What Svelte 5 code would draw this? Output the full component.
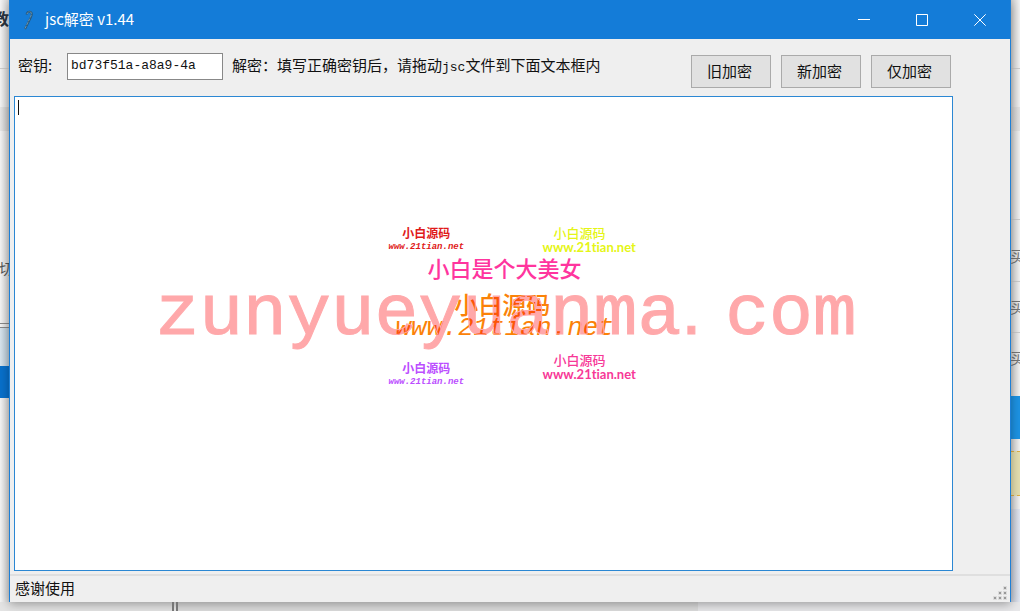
<script>
  let key = $state('bd73f51a-a8a9-4a');
  let content = $state('');
  const actions = ['旧加密', '新加密', '仅加密'];
  const grip = [[10, 0], [5, 5], [10, 5], [0, 10], [5, 10], [10, 10]];
</script>

<div class="desktop">
  <div class="strip left" aria-hidden="true">
    <span class="head">教</span>
    <i class="rule" style="top:68px"></i>
    <i class="band grey" style="top:107px;height:24px"></i>
    <span class="bit" style="top:258px">切</span>
    <i class="band bar" style="top:323px"></i>
    <i class="band pale" style="top:328px;height:38px"></i>
    <i class="band blue" style="top:366px;height:32px"></i>
  </div>

  <main class="window">
    <header class="titlebar">
      <svg class="appicon" width="16" height="20" viewBox="0 0 16 20" fill="none">
        <path d="M3 19 8.500 8C10 5 10.500 3 8.500 2S5 2.500 4.500 4.500" stroke="#24587f" stroke-width="2" />
        <path d="M3 18.500 8 8C9.500 5 10 3 8.500 2S5.500 2.500 5 4" stroke="#7097ae" stroke-width="1" stroke-dasharray="3 1" />
      </svg>
      <h1>jsc解密 v1.44</h1>
      <div class="controls">
        <button aria-label="最小化"><svg width="12" height="12" viewBox="0 0 12 12"><path d="M0 5.500H12" /></svg></button>
        <button aria-label="最大化"><svg width="12" height="12" viewBox="0 0 12 12"><path d="M.5.5h11v11H.5z" /></svg></button>
        <button aria-label="关闭"><svg width="12" height="12" viewBox="0 0 12 12"><path d="m.3.3 11.400 11.400m0-11.400L.3 11.700" /></svg></button>
      </div>
    </header>

    <section class="body">
      <div class="toolbar">
        <label for="key">密钥:</label>
        <input id="key" type="text" bind:value={key} />
        <p>解密：填写正确密钥后，请拖动<span class="mono">jsc</span>文件到下面文本框内</p>
        <div class="actions">
          {#each actions as action}
            <button>{action}</button>
          {/each}
        </div>
      </div>

      <div class="editor">
        <textarea aria-label="文本框" bind:value={content}></textarea>
        <i class="caret"></i>
        <div class="marks">
          <div class="mark hand red"><b>小白源码</b><em>www.21tian.net</em></div>
          <div class="mark round yellow"><b>小白源码</b><span>www.21tian.net</span></div>
          <div class="mark title">小白是个大美女</div>
          <div class="mark hand orange"><b>小白源码</b><em>www.21tian.net</em></div>
          <div class="mark site">zunyueyuanma<span>.</span>com</div>
          <div class="mark hand purple"><b>小白源码</b><em>www.21tian.net</em></div>
          <div class="mark round pink"><b>小白源码</b><span>www.21tian.net</span></div>
        </div>
      </div>
    </section>

    <footer>
      <span>感谢使用</span>
      <svg width="14" height="14" viewBox="-1 -1 14 14">
        {#each grip as [x, y]}
          <rect x={x - 1} y={y - 1} width="4" height="4" fill="#dcdcdc" />
          <rect {x} {y} width="2" height="2" fill="#999" />
        {/each}
      </svg>
    </footer>
  </main>

  <div class="strip right" aria-hidden="true">
    <i class="band grey" style="top:107px;height:24px"></i>
    <i class="rule" style="top:68px"></i>
    <i class="rule" style="top:219px"></i>
    <span class="bit" style="top:246px">买</span>
    <i class="rule" style="top:281px"></i>
    <span class="bit" style="top:297px">购买</span>
    <i class="rule" style="top:332px"></i>
    <span class="bit" style="top:348px">购买</span>
    <i class="band sky" style="top:396px;height:43px"></i>
    <i class="band note" style="top:451px;height:45px"></i>
    <i class="band cool" style="top:509px;height:102px"></i>
  </div>
  <div class="base" aria-hidden="true"><i></i><b></b><i class="mid"></i><i class="end"></i></div>
</div>

<style>
  :global(body) { margin: 0; }
  .desktop {
    min-height: 100vh;
    display: grid;
    grid-template-columns: 9px minmax(0, 1fr) 9px;
    grid-template-rows: minmax(0, 1fr) 9px;
    overflow: hidden;
    background: #e4e4e4;
    font-family: "Noto Sans CJK SC", sans-serif;
    font-size: 15px;
    line-height: 20px;
    color: #111;
  }
  .strip { position: relative; overflow: hidden; }
  .left { background: linear-gradient(90deg, #f5f5f5, #d5d5d5); }
  .right { background: linear-gradient(90deg, #cfcfcf, #f3f3f3); }
  .strip > * { position: absolute; }
  .rule { left: 0; right: 0; height: 1px; background: #ccc; }
  .band { left: 0; right: 0; }
  .grey { background: linear-gradient(90deg, #ccc, #e4e4e4); }
  .left .grey { background: linear-gradient(90deg, #e8e8e8, #c6c6c6); }
  .bar { height: 3px; border-top: 1px solid #888; border-bottom: 1px solid #888; }
  .pale { background: linear-gradient(90deg, #d9e5ee, #b7c9d6); }
  .blue { background: #0870cb; }
  .sky { background: #1d93e4; }
  .note { box-sizing: border-box; background: #e5dfb0; border: dashed #dfb044; border-width: 1px 0; }
  .cool { background: linear-gradient(90deg, #c4c8d2, #e2e7f2); }
  .head { right: 0; top: 8px; font-size: 16px; font-weight: 700; color: #2b3440; }
  .bit { right: -5px; white-space: nowrap; color: #777; }
  .left .bit { color: #555; }

  .window {
    display: flex;
    flex-direction: column;
    box-sizing: border-box;
    border: solid #1d7fd6;
    border-width: 0 1px;
    background: #efefef;
    box-shadow: 0 2px 10px rgba(0, 0, 0, .35);
    z-index: 1;
  }
  .titlebar {
    display: flex;
    align-items: center;
    height: 39px;
    padding: 0 1px 0 12px;
    background: #147cd8;
    color: #fff;
  }
  .titlebar h1 { flex: 1; margin: 0 0 1px 7px; font-size: 15px; line-height: 20px; font-weight: 400; }
  .controls { display: flex; height: 100%; }
  .controls button {
    display: grid;
    place-items: center;
    width: 58px;
    border: 0;
    padding: 0;
    background: none;
  }
  .controls svg { fill: none; stroke: #fff; stroke-width: 1; }
  .body {
    flex: 1;
    display: flex;
    flex-direction: column;
    padding: 12px 57px 3px 4px;
  }
  .toolbar { display: flex; align-items: flex-start; height: 45px; padding: 0 2px 0 4px; }
  .toolbar label { width: 49px; padding-top: 4px; }
  .toolbar input {
    box-sizing: border-box;
    width: 156px;
    height: 27px;
    margin-top: 2px;
    padding: 0 3px 2px;
    border: 1px solid #888;
    background: #fff;
    color: #111;
    font: 13px "Liberation Mono", monospace;
  }
  .toolbar p { flex: 1; margin: 0 0 0 9px; padding-top: 4px; white-space: nowrap; }
  .mono { font: 13px "Liberation Mono", monospace; }
  .actions { display: flex; gap: 10px; padding-top: 4px; }
  .actions button {
    width: 80px;
    height: 33px;
    padding: 0 3px 2px 0;
    border: 1px solid #aaa;
    background: #e1e1e1;
    color: #111;
    font: inherit;
  }
  .editor { position: relative; flex: 1; display: flex; overflow: hidden; }
  .editor textarea {
    flex: 1;
    border: 1px solid #2b87d3;
    padding: 3px;
    background: #fff;
    resize: none;
    outline: 0;
    font: inherit;
  }
  .caret { position: absolute; left: 4px; top: 4px; width: 1px; height: 15px; background: #111; }
  .marks { position: absolute; left: 50%; top: 50%; pointer-events: none; }
  .mark {
    position: absolute;
    display: flex;
    flex-direction: column;
    align-items: center;
    width: max-content;
    white-space: nowrap;
  }
  .hand em { font-family: "Liberation Mono", monospace; font-weight: 700; }
  .hand b { font-weight: 700; }
  .red, .purple { left: -95px; font-size: 12px; line-height: 14px; }
  .red em, .purple em { font-size: 9px; }
  .red { top: -108px; color: #e01a1a; }
  .purple { top: 27px; color: #bb4dff; }
  .round { left: 59px; align-items: flex-start; font-size: 13px; line-height: 14px; }
  .round b { padding-left: 11px; font-weight: 500; }
  .round span { font-family: Lato, sans-serif; font-weight: 700; font-variant-ligatures: none; }
  .yellow { top: -108px; color: #e5f516; }
  .pink { top: 19px; color: #f73897; }
  .title { left: -56px; top: -82px; font-size: 22px; line-height: 30px; font-weight: 500; color: #ff359e; }
  .site {
    left: -328px;
    top: -65px;
    flex-direction: row;
    align-items: baseline;
    font: 73px/80px "Liberation Mono", monospace;
    color: rgba(255, 0, 6, .34);
    -webkit-text-stroke: 1px #ffa8aa;
  }
  .site span { width: 44px; font-family: "Liberation Sans", sans-serif; }
  .orange { left: -88px; top: -43px; font-size: 24px; line-height: 25px; color: #fb8208; }
  .orange b { padding-right: 5px; font-weight: 500; }
  .orange em { font-size: 26px; font-weight: 400; }
  footer {
    display: flex;
    justify-content: space-between;
    align-items: flex-end;
    height: 26px;
    border-top: 2px solid #dfdfdf;
    padding: 0 3px 0 5px;
  }
  footer span { align-self: center; padding-bottom: 2px; }
  footer svg { margin-bottom: 2px; }
  .base { grid-column: 1 / -1; display: flex; background: #e8e8e8; }
  .base i { width: 172px; background: #e4e4e4; }
  .base b { width: 2px; border: solid #777; border-width: 0 2px; z-index: 2; }
  .base .mid { width: 520px; background: #dcdcdc; }
  .base .end { flex: 1; background: #e8e8ea; }
</style>
